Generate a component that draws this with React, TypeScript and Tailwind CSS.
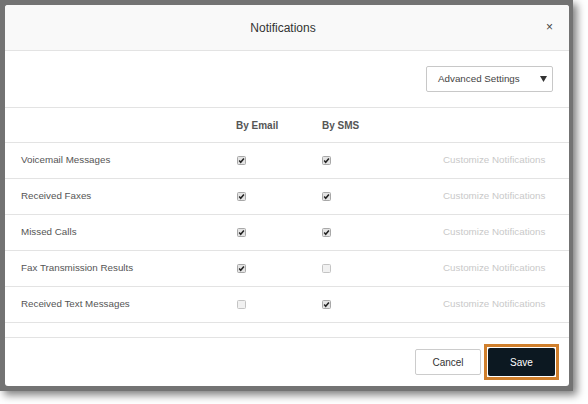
import React from "react";

function Box({ checked }: { checked: boolean }) {
  return (
    <svg width="9" height="9" viewBox="0 0 9 9" className="block">
      <rect
        x="0.5"
        y="0.5"
        width="8"
        height="8"
        rx="1"
        fill={checked ? "#e4e4e4" : "#f1f1f1"}
        stroke={checked ? "#a8a8a8" : "#c4c4c4"}
      />
      {checked && (
        <path d="M2.2 4.6 L3.7 6.3 L6.9 2.4" fill="none" stroke="#222" strokeWidth="1.5" />
      )}
    </svg>
  );
}

const rows = [
  { label: "Voicemail Messages", email: true, sms: true },
  { label: "Received Faxes", email: true, sms: true },
  { label: "Missed Calls", email: true, sms: true },
  { label: "Fax Transmission Results", email: true, sms: false },
  { label: "Received Text Messages", email: false, sms: true },
];

export default function App() {
  return (
    <div className="w-[588px] h-[404px] bg-white font-['Liberation_Sans',Arial,sans-serif]">
      <div className="w-[573px] h-[391px] bg-[#737373] pt-[5px] pl-[5px] shadow-[4px_4px_8px_rgba(0,0,0,0.5)]">
        <div className="w-[564px] h-[381px] bg-white rounded-[3px] flex flex-col overflow-hidden">
          {/* header */}
          <div className="h-[46px] shrink-0 bg-[#f9f9f9] border-b border-[#e3e3e3] flex items-center justify-center pr-[8px] relative">
            <span className="text-[12px] text-[#333]">Notifications</span>
            <span className="absolute right-[16px] top-[16px] text-[12px] leading-none text-[#444]">×</span>
          </div>
          {/* settings */}
          <div className="h-[57px] shrink-0 border-b border-[#e3e3e3] flex justify-end items-start pt-[15px] pr-[16px]">
            <div className="w-[127px] h-[26px] border border-[#c8c8c8] rounded-[2px] flex items-center justify-between pl-[11px] pr-[5px]">
              <span className="text-[9.8px] text-[#444]">Advanced Settings</span>
              <svg width="7" height="6" viewBox="0 0 7 6">
                <path d="M0 0 H7 L3.5 6 Z" fill="#333" />
              </svg>
            </div>
          </div>
          {/* table header */}
          <div className="h-[35px] shrink-0 border-b border-[#e3e3e3] grid grid-cols-[215px_86px_121px_1fr] items-center pl-[16px]">
            <span />
            <span className="text-[10px] font-bold text-[#555]">By Email</span>
            <span className="text-[10px] font-bold text-[#555]">By SMS</span>
            <span />
          </div>
          {rows.map((r) => (
            <div
              key={r.label}
              className="h-[36px] shrink-0 border-b border-[#e3e3e3] grid grid-cols-[215px_86px_121px_1fr] items-center pl-[16px]"
            >
              <span className="text-[9.8px] text-[#555]">{r.label}</span>
              <span className="pl-[1px]">
                <Box checked={r.email} />
              </span>
              <span>
                <Box checked={r.sms} />
              </span>
              <span className="text-[9.8px] text-[#c9c9c9]">Customize Notifications</span>
            </div>
          ))}
          <div className="h-[14px] shrink-0" />
          {/* footer */}
          <div className="flex-1 border-t border-[#e3e3e3] flex justify-end items-center pr-[10px] gap-[3px]">
            <button className="w-[66px] h-[26px] border border-[#cccccc] rounded-[2px] bg-white text-[10px] text-[#333]">
              Cancel
            </button>
            <div className="border-[3px] border-[#d07f2c] p-[1px]">
              <button className="w-[67px] h-[28px] bg-[#0c1821] rounded-[2px] text-[10px] text-white block">
                Save
              </button>
            </div>
          </div>
        </div>
      </div>
    </div>
  );
}
